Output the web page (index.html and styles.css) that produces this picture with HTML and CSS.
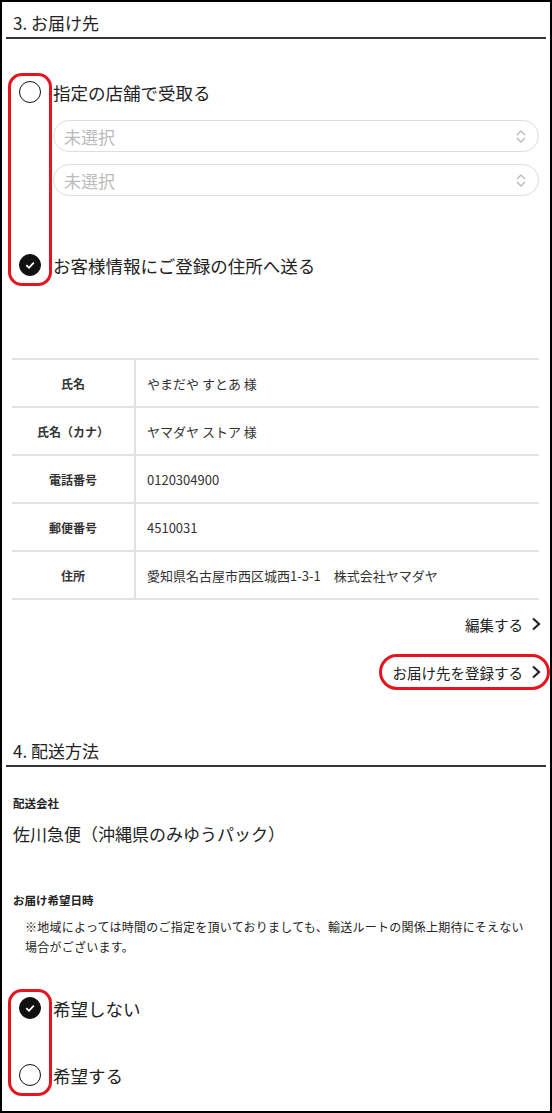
FILE: index.html
```html
<html>
<head>
    <title>ご注文手続き</title>
    <meta charset="utf-8">
    <link rel="stylesheet" href="styles.css">
</head>
<body>
<div class="page">
    <section class="block">
        <h2 class="section-title">3. お届け先</h2>

        <div class="radio-group">
            <div class="mark"></div>
            <label class="option"><span class="radio"></span>指定の店舗で受取る</label>
            <div class="store-selects">
                <div class="select">
                    <span>未選択</span>
                    <svg width="10" height="15" viewBox="0 0 10 15"><polyline points="1,6 5,2 9,6" fill="none" stroke="#bbb" stroke-width="1.4"/><polyline points="1,9 5,13 9,9" fill="none" stroke="#bbb" stroke-width="1.4"/></svg>
                </div>
                <div class="select">
                    <span>未選択</span>
                    <svg width="10" height="15" viewBox="0 0 10 15"><polyline points="1,6 5,2 9,6" fill="none" stroke="#bbb" stroke-width="1.4"/><polyline points="1,9 5,13 9,9" fill="none" stroke="#bbb" stroke-width="1.4"/></svg>
                </div>
            </div>
            <label class="option option-send">
                <span class="radio checked"><svg width="12" height="12" viewBox="0 0 12 12"><polyline points="2.3,6.2 5,8.8 9.8,3.6" fill="none" stroke="#fff" stroke-width="1.8"/></svg></span>お客様情報にご登録の住所へ送る
            </label>
        </div>

        <table class="address-table">
            <tr><th>氏名</th><td>やまだや すとあ 様</td></tr>
            <tr><th>氏名（カナ）</th><td>ヤマダヤ ストア 様</td></tr>
            <tr><th>電話番号</th><td>0120304900</td></tr>
            <tr><th>郵便番号</th><td>4510031</td></tr>
            <tr><th>住所</th><td>愛知県名古屋市西区城西1-3-1　株式会社ヤマダヤ</td></tr>
        </table>

        <div class="links">
            <a class="link" href="#">編集する<svg width="10" height="14" viewBox="0 0 10 14"><polyline points="2,1.5 8,7 2,12.5" fill="none" stroke="#222" stroke-width="2.2"/></svg></a>
            <a class="link link-marked" href="#">お届け先を登録する<svg width="10" height="14" viewBox="0 0 10 14"><polyline points="2,1.5 8,7 2,12.5" fill="none" stroke="#222" stroke-width="2.2"/></svg></a>
        </div>
    </section>

    <section class="block">
        <h2 class="section-title">4. 配送方法</h2>

        <p class="field-label">配送会社</p>
        <p class="field-value">佐川急便（沖縄県のみゆうパック）</p>

        <p class="field-label field-label-date">お届け希望日時</p>
        <p class="note">※地域によっては時間のご指定を頂いておりましても、輸送ルートの関係上期待にそえない場合がございます。</p>

        <div class="radio-group radio-group-date">
            <div class="mark"></div>
            <label class="option">
                <span class="radio checked"><svg width="12" height="12" viewBox="0 0 12 12"><polyline points="2.3,6.2 5,8.8 9.8,3.6" fill="none" stroke="#fff" stroke-width="1.8"/></svg></span>希望しない
            </label>
            <label class="option"><span class="radio"></span>希望する</label>
        </div>
    </section>
</div>
</body>
</html>
```

FILE: styles.css
```css
* {
    box-sizing: border-box;
}
body {
    margin: 0;
    font-family: "Noto Sans CJK JP", "Noto Sans", sans-serif;
    color: #222;
    background-color: #fff;
}
.page {
    width: 552px;
    height: 1113px;
    border: 2px solid #000;
    overflow: hidden;
}
.block + .block {
    margin-top: 46px;
}
.section-title {
    margin: 0 4px;
    padding: 9px 7px 2px;
    font-size: 17px;
    line-height: 24px;
    font-weight: normal;
    border-bottom: 2px solid #333;
}
/* Radio lists */
.radio-group {
    position: relative;
    margin-top: 35px;
    padding: 0 11px 0 17px;
}
.radio-group-date {
    margin-top: 33px;
}
.radio-group-date .option + .option {
    margin-top: 31px;
}
.mark {
    position: absolute;
    left: 6px;
    width: 44px;
    top: -1px;
    bottom: -3px;
    border: 3px solid #e5141e;
    border-radius: 14px;
}
.option {
    display: flex;
    align-items: center;
    gap: 12px;
    height: 36px;
    font-size: 17.5px;
}
.option-send {
    margin-top: 51px;
}
.radio {
    flex: none;
    width: 22px;
    height: 22px;
    border: 1.5px solid #111;
    border-radius: 50%;
    display: flex;
    align-items: center;
    justify-content: center;
}
.radio.checked {
    background-color: #111;
}
.store-selects {
    margin: 10px 0 0 34px;
    display: flex;
    flex-direction: column;
    gap: 12px;
}
.select {
    height: 32px;
    border: 1px solid #ddd;
    border-radius: 16px;
    display: flex;
    align-items: center;
    justify-content: space-between;
    padding: 0 12px 0 10px;
    font-size: 17px;
    color: #bbb;
}
/* Address table */
.address-table {
    margin: 75px 11px 0 10px;
    width: 527px;
    border-collapse: collapse;
}
.address-table th,
.address-table td {
    height: 48px;
    border-top: 2px solid #e2e2e2;
    border-bottom: 2px solid #e2e2e2;
    padding: 0 11px;
}
.address-table th {
    width: 123px;
    border-right: 2px solid #e2e2e2;
    font-size: 12px;
    font-weight: bold;
    text-align: center;
    color: #333;
}
.address-table td {
    font-size: 13px;
    color: #333;
}
.links {
    display: flex;
    flex-direction: column;
    align-items: flex-end;
    gap: 24px;
    margin-top: 12px;
    padding-right: 9px;
}
.link {
    position: relative;
    display: flex;
    align-items: center;
    gap: 8px;
    height: 24px;
    font-size: 14.5px;
    color: #222;
    text-decoration: none;
}
.link-marked::after {
    content: "";
    position: absolute;
    left: -14px;
    right: -9px;
    top: -6px;
    bottom: -6px;
    border: 3px solid #e5141e;
    border-radius: 18px;
}
/* Delivery fields */
.field-label {
    margin: 28px 11px 0;
    font-size: 11.5px;
    font-weight: bold;
    line-height: 16px;
}
.field-label-date {
    margin-top: 46px;
}
.field-value {
    margin: 11px 11px 0;
    font-size: 17px;
    line-height: 24px;
}
.note {
    margin: 9px 17px 0 23px;
    font-size: 12px;
    letter-spacing: 0.25px;
    line-height: 20px;
}
```
